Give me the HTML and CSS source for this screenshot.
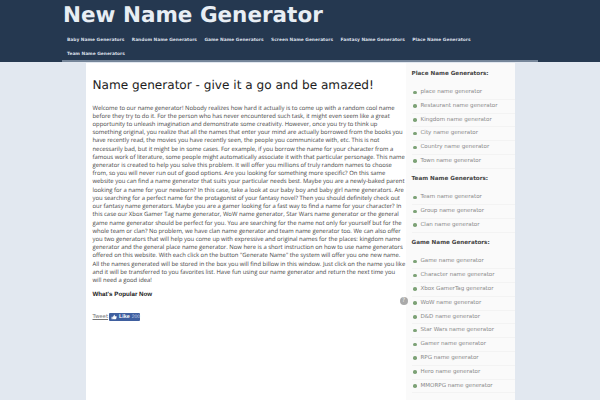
FILE: index.html
```html
<!DOCTYPE html>
<html lang="en">
<head>
<meta charset="utf-8">
<title>New Name Generator</title>
<link rel="stylesheet" href="styles.css">
</head>
<body>
<header class="site-header">
  <div class="header-inner">
    <div class="site-title">New Name Generator</div>
    <nav class="nav">
      <a>Baby Name Generators</a>
      <a>Random Name Generators</a>
      <a>Game Name Generators</a>
      <a>Screen Name Generators</a>
      <a>Fantasy Name Generators</a>
      <a>Place Name Generators</a>
      <a>Team Name Generators</a>
    </nav>
  </div>
</header>
<div class="page">
  <main class="content">
    <h1>Name generator - give it a go and be amazed!</h1>
    <p class="intro">Welcome to our name generator! Nobody realizes how hard it actually is to come up with a random cool name before they try to do it. For the person who has never encountered such task, it might even seem like a great opportunity to unleash imagination and demonstrate some creativity. However, once you try to think up something original, you realize that all the names that enter your mind are actually borrowed from the books you have recently read, the movies you have recently seen, the people you communicate with, etc. This is not necessarily bad, but it might be in some cases. For example, if you borrow the name for your character from a famous work of literature, some people might automatically associate it with that particular personage. This name generator is created to help you solve this problem. It will offer you millions of truly random names to choose from, so you will never run out of good options. Are you looking for something more specific? On this same website you can find a name generator that suits your particular needs best. Maybe you are a newly-baked parent looking for a name for your newborn? In this case, take a look at our baby boy and baby girl name generators. Are you searching for a perfect name for the protagonist of your fantasy novel? Then you should definitely check out our fantasy name generators. Maybe you are a gamer looking for a fast way to find a name for your character? In this case our Xbox Gamer Tag name generator, WoW name generator, Star Wars name generator or the general game name generator should be perfect for you. You are searching for the name not only for yourself but for the whole team or clan? No problem, we have clan name generator and team name generator too. We can also offer you two generators that will help you come up with expressive and original names for the places: kingdom name generator and the general place name generator. Now here is a short instruction on how to use name generators offered on this website. With each click on the button "Generate Name" the system will offer you one new name. All the names generated will be stored in the box you will find billow in this window. Just click on the name you like and it will be transferred to you favorites list. Have fun using our name generator and return the next time you will need a good idea!</p>
    <div class="popular">
      <h2>What's Popular Now</h2>
      <span class="help">?</span>
    </div>
    <div class="social">
      <a class="tweet">Tweet</a>
      <span class="like">
        <svg class="thumb" viewBox="0 0 10 10" aria-hidden="true"><path d="M1 4.500h2v4.500H1zM3.500 4.500 5.500 1c1 0 1.200 1 .8 2.800H9c.8 0 .8 1 .4 1.400.3.500.2 1-.2 1.300.2.500 0 1-.4 1.200 0 .7-.4 1-1 1H5c-.7 0-1-.3-1.500-.4z"/></svg>
        <b>Like</b> <span>200</span>
      </span>
    </div>
  </main>
  <aside class="sidebar">
    <h3>Place Name Generators:</h3>
    <ul>
      <li>place name generator</li>
      <li>Restaurant name generator</li>
      <li>Kingdom name generator</li>
      <li>City name generator</li>
      <li>Country name generator</li>
      <li>Town name generator</li>
    </ul>
    <h3>Team Name Generators:</h3>
    <ul>
      <li>Team name generator</li>
      <li>Group name generator</li>
      <li>Clan name generator</li>
    </ul>
    <h3>Game Name Generators:</h3>
    <ul>
      <li>Game name generator</li>
      <li>Character name generator</li>
      <li>Xbox GamerTag generator</li>
      <li>WoW name generator</li>
      <li>D&amp;D name generator</li>
      <li>Star Wars name generator</li>
      <li>Gamer name generator</li>
      <li>RPG name generator</li>
      <li>Hero name generator</li>
      <li>MMORPG name generator</li>
    </ul>
  </aside>
</div>
</body>
</html>
```
FILE: styles.css
```css
html, body {
  margin: 0;
  height: 400px;
  overflow: hidden;
  background: #e2e8f0;
  font-family: "DejaVu Sans", sans-serif;
  text-rendering: geometricPrecision;
}
.site-header {
  background: #253850;
  height: 62px;
}
.header-inner {
  width: 476px;
  height: 62px;
  margin: 0 auto;
  border-bottom: 2px solid #76869a;
  box-sizing: border-box;
}
.site-title {
  font-size: 21.5px;
  font-weight: bold;
  line-height: 26px;
  color: #e8eef4;
  padding: 3px 0 0 1px;
}
.nav {
  display: flex;
  flex-wrap: wrap;
  width: 440px;
  column-gap: 7.500px;
  padding: 5px 0 0 5px;
  line-height: 14px;
}
.nav a {
  font-size: 4.4px;
  font-weight: bold;
  color: #d8dfe6;
}
.page {
  display: flex;
  width: 429px;
  height: 337px;
  margin: 1px auto 0;
  background: #fff;
}
.content {
  position: relative;
  width: 313px;
  padding: 14px 0 0 7px;
}
h1 {
  margin: 0;
  font-size: 12.1px;
  font-weight: normal;
  line-height: 17px;
  color: #1c1c1c;
  white-space: nowrap;
}
.intro {
  margin: 9.500px 0 0;
  width: 313px;
  font-family: "Open Sans", sans-serif;
  font-size: 5.9px;
  line-height: 8.22px;
  color: #444;
}
.popular h2 {
  margin: 5.700px 0 0;
  font-family: "Liberation Sans", sans-serif;
  font-size: 6.2px;
  font-weight: bold;
  line-height: 10px;
  color: #222;
}
.help {
  position: absolute;
  left: 314px;
  top: 234px;
  width: 8px;
  height: 8px;
  border-radius: 50%;
  background: #a9a9a9;
  color: #eee;
  font-size: 6px;
  line-height: 8px;
  text-align: center;
}
.social {
  display: flex;
  align-items: center;
  margin-top: 12.500px;
  height: 9px;
}
.tweet {
  font-size: 5.4px;
  color: #777;
  text-decoration: underline;
  margin-right: 1px;
}
.like {
  display: inline-flex;
  align-items: center;
  gap: 2px;
  height: 8px;
  width: 31px;
  box-sizing: border-box;
  padding-left: 2px;
  background: #3f5f9f;
  border-radius: 1px;
  color: #fff;
  font-family: "Liberation Sans", sans-serif;
  font-size: 5.4px;
}
.like span { color: #cdd6ea; font-size: 5px; }
.thumb {
  width: 6px;
  height: 6px;
  fill: #fff;
}
.sidebar {
  flex: 1;
  background: #fafafa;
  padding: 7px 0 0 6px;
}
h3 {
  margin: 0;
  font-size: 5.65px;
  font-weight: bold;
  line-height: 9px;
  color: #444;
}
ul {
  list-style: none;
  margin: 7px 0 6.600px;
  padding: 0;
}
li {
  position: relative;
  height: 13.800px;
  line-height: 13px;
  padding-left: 9px;
  box-sizing: border-box;
  font-size: 5.55px;
  color: #888;
  border-bottom: 1px solid #f3f3f3;
}
li::before {
  content: "";
  position: absolute;
  left: 1.500px;
  top: 4.500px;
  width: 3.500px;
  height: 3.500px;
  border-radius: 50%;
  background: #7da277;
}
```
